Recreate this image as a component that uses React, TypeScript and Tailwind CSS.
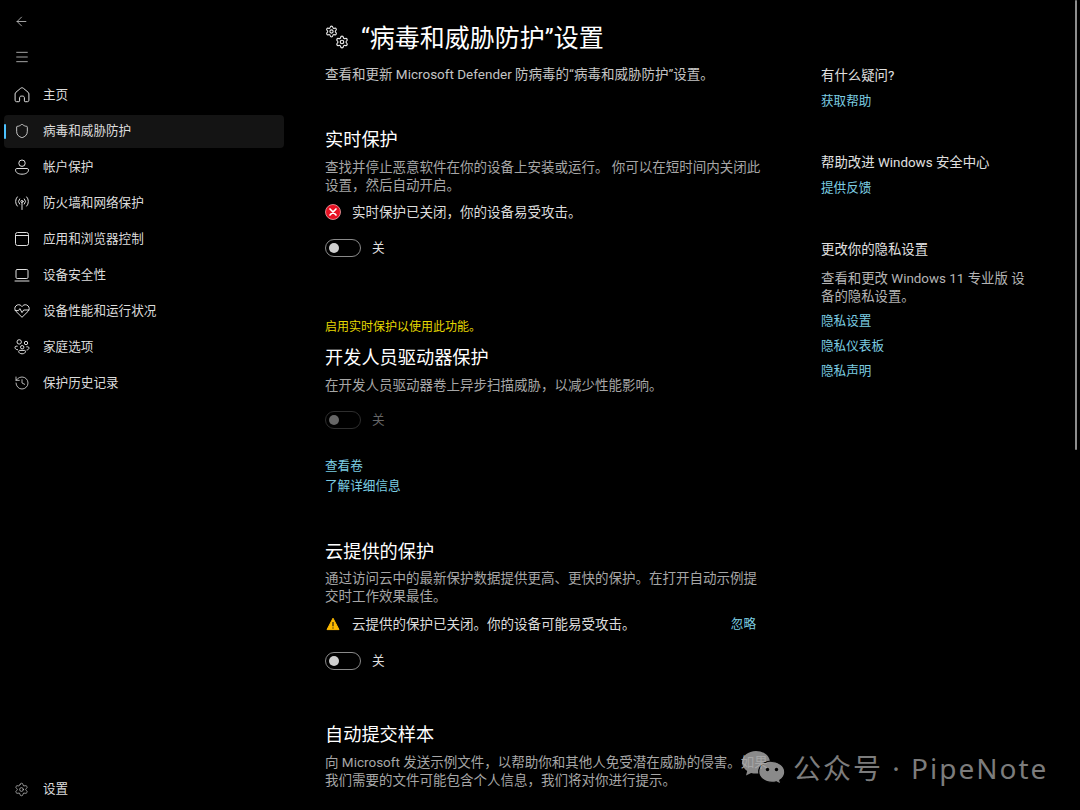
import React, { FC, ReactNode } from "react";
import { ArrowLeft, History, Menu, Settings, Shield } from "lucide-react";

const HomeIcon = () => (
  <svg width="16" height="16" viewBox="0 0 16 16" fill="none" stroke="currentColor" strokeWidth="1">
    <path d="M6.6 1.3 2 5.2c-.6.5-.9 1-.9 1.8v6.3c0 .8.6 1.4 1.4 1.4h2.3c.5 0 .8-.3.8-.8v-3.2c0-.9.7-1.600 1.600-1.600h1.600c.9 0 1.600.7 1.600 1.600v3.200c0 .5.3.8.8.8h2.300c.8 0 1.400-.6 1.400-1.400V7c0-.8-.3-1.300-.9-1.800L9.400 1.300c-.9-.7-1.900-.7-2.800 0Z" />
  </svg>
);

const PersonIcon = () => (
  <svg width="16" height="16" viewBox="0 0 16 16" fill="none" stroke="currentColor" strokeWidth="1">
    <circle cx="8" cy="4.2" r="3.2" />
    <path d="M2.8 9.5h10.4c.7 0 1.3.6 1.3 1.3 0 2.7-2.7 4.4-6.5 4.4s-6.5-1.7-6.5-4.400c0-.7.6-1.300 1.300-1.300Z" />
  </svg>
);

const AntennaIcon = () => (
  <svg width="16" height="16" viewBox="0 0 16 16" fill="none" stroke="currentColor" strokeWidth="1" strokeLinecap="round">
    <circle cx="8" cy="6.5" r="1.1" />
    <path d="M8 8v6.5M5.600 3.900a3.700 3.700 0 0 0 0 5.200M10.400 3.900a3.700 3.700 0 0 1 0 5.200M3.300 1.900a6.800 6.800 0 0 0 0 9.200M12.700 1.900a6.800 6.800 0 0 1 0 9.200" />
  </svg>
);

const WindowIcon = () => (
  <svg width="16" height="16" viewBox="0 0 16 16" fill="none" stroke="currentColor" strokeWidth="1">
    <rect x="1.5" y="1.5" width="13" height="13" rx="2" />
    <path d="M1.5 4.5h13" />
  </svg>
);

const LaptopIcon = () => (
  <svg width="16" height="16" viewBox="0 0 16 16" fill="none" stroke="currentColor" strokeWidth="1" strokeLinecap="round">
    <rect x="2" y="2.5" width="12" height="9" rx="1.2" />
    <path d="M1 14h14" />
  </svg>
);

const HeartIcon = () => (
  <svg width="16" height="16" viewBox="0 0 16 16" fill="none" stroke="currentColor" strokeWidth="1" strokeLinejoin="round">
    <path d="M8 14.300 2 8.400C.4 6.800.4 4.300 2 2.800c1.600-1.500 3.900-1.400 5.400.1l.6.6.6-.6c1.500-1.500 3.800-1.600 5.400-.1 1.600 1.500 1.600 4 0 5.600l-6 5.900Z" />
    <path d="M.8 7.600h3.700l1.400-2 2.100 4 1.700-2.600h5.500" />
  </svg>
);

const FamilyIcon = () => (
  <svg width="16" height="16" viewBox="0 0 16 16" fill="none" stroke="currentColor" strokeWidth="1">
    <circle cx="5.2" cy="2.9" r="2.2" />
    <circle cx="12" cy="4" r="1.7" />
    <circle cx="8.2" cy="8.2" r="1.7" />
    <path d="M3.600 7.200H2.200c-.7 0-1.200.5-1.200 1.100 0 1.500 1.100 2.400 3 2.500M12.400 7.800h1.400c.7 0 1.200.5 1.200 1.100 0 1.200-1 2-2.400 2.100" />
    <path d="M5.600 11.400h5c.5 0 .9.4.9.9 0 1.500-1.400 2.500-3.400 2.500s-3.400-1-3.400-2.500c0-.5.4-.9.9-.9Z" />
  </svg>
);

const ErrorIcon = () => (
  <svg width="16" height="16" viewBox="0 0 16 16">
    <circle cx="8" cy="8" r="7.500" fill="#e81123" stroke="#f3a3a8" strokeWidth="0.8" />
    <path d="M5 5l6 6M11 5l-6 6" stroke="#fff" strokeWidth="1.7" strokeLinecap="round" />
  </svg>
);

const WarningIcon = () => (
  <svg width="14" height="14" viewBox="0 0 14 14">
    <path d="M7 1.200 13 12.600H1L7 1.200Z" fill="#fcb900" stroke="#fcb900" strokeLinejoin="round" />
    <path d="M7 5v4.300M7 10.400v1.100" stroke="#111" strokeWidth="1.1" />
  </svg>
);

const WeChatIcon = () => (
  <svg width="46" height="38" viewBox="0 0 46 38" fill="#8a8a8a">
    <path d="M15 2C7.300 2 1 7 1 13.200c0 3.500 2 6.600 5.200 8.700L5 26.500l5.100-2.600c1.500.4 3.100.6 4.900.6 7.700 0 14-5 14-11.300S22.700 2 15 2Z" />
    <path stroke="#000" strokeWidth="1.2" d="M31 12c-7.400 0-13.300 4.800-13.300 10.700S23.600 33.400 31 33.400c1.500 0 3-.2 4.300-.6l4.600 2.500-1.100-4.100c3.100-2 5-4.900 5-8 0-5.900-5.900-10.700-12.800-10.700Z" />
    <circle cx="26.500" cy="20.500" r="1.700" fill="#000" />
    <circle cx="35.500" cy="20.500" r="1.700" fill="#000" />
  </svg>
);

const navItems: { label: string; icon: ReactNode; active?: boolean }[] = [
  { label: "主页", icon: <HomeIcon /> },
  { label: "病毒和威胁防护", icon: <Shield size={16} strokeWidth={1.3} />, active: true },
  { label: "帐户保护", icon: <PersonIcon /> },
  { label: "防火墙和网络保护", icon: <AntennaIcon /> },
  { label: "应用和浏览器控制", icon: <WindowIcon /> },
  { label: "设备安全性", icon: <LaptopIcon /> },
  { label: "设备性能和运行状况", icon: <HeartIcon /> },
  { label: "家庭选项", icon: <FamilyIcon /> },
  { label: "保护历史记录", icon: <History size={16} strokeWidth={1.2} /> },
];

const Toggle: FC<{ disabled?: boolean }> = ({ disabled }) => (
  <div className="flex h-[18px] items-center">
    <div
      className={`flex h-[18px] w-9 items-center rounded-full border pl-[3px] ${
        disabled ? "border-[#2e2e2e]" : "border-[#8a8a8a]"
      }`}
    >
      <div className={`size-[10px] rounded-full ${disabled ? "bg-[#666]" : "bg-[#cfcfcf]"}`} />
    </div>
    <span className={`ml-[11px] text-[12.6px] leading-[18px] ${disabled ? "text-[#666]" : "text-[#e0e0e0]"}`}>关</span>
  </div>
);

const Heading: FC<{ children: ReactNode; className?: string }> = ({ children, className = "" }) => (
  <h2 className={`text-[18.2px] leading-[24px] text-white ${className}`}>{children}</h2>
);

const Desc: FC<{ children: ReactNode; className?: string }> = ({ children, className = "" }) => (
  <p className={`text-[13.5px] leading-[18px] text-[#a6a6a6] ${className}`}>{children}</p>
);

const LinkText: FC<{ children: ReactNode; className?: string }> = ({ children, className = "" }) => (
  <a className={`block text-[12.6px] leading-[18px] text-[#7ccde2] ${className}`}>{children}</a>
);

export default function App() {
  return (
    <div className="relative flex h-[810px] w-[1080px] overflow-hidden bg-black font-['Roboto','Noto_Sans_CJK_SC',sans-serif] text-[#e6e6e6]">
      {/* Sidebar */}
      <aside className="flex h-full w-[325px] shrink-0 flex-col pl-1">
        <div className="flex h-[36px] items-center pl-[10px] pt-[6px] text-[#c8c8c8]">
          <ArrowLeft size={15} strokeWidth={1.3} />
        </div>
        <div className="flex h-[36px] items-center pl-[10px] pt-[6px] text-[#e0e0e0]">
          <Menu size={16} strokeWidth={1.1} />
        </div>
        <nav className="w-[280px] pt-[5px]">
          {navItems.map((item) => (
            <div key={item.label} className="flex h-[36px] items-center">
              <div
                className={`relative flex h-[33px] w-full items-center rounded pl-[10px] text-[12.6px] ${
                  item.active ? "bg-[#141414]" : ""
                }`}
              >
                {item.active && <span className="absolute left-0 h-[15px] w-[2px] rounded-full bg-[#4cc2ff]" />}
                <span className="flex size-4 items-center justify-center text-[#e0e0e0]">{item.icon}</span>
                <span className="ml-[13px] leading-[18px] text-[#dcdcdc]">{item.label}</span>
              </div>
            </div>
          ))}
        </nav>
        <div className="mt-auto mb-[12px] flex h-[18px] items-center pl-[10px] text-[12.6px] text-[#dcdcdc]">
          <Settings size={15} strokeWidth={1.1} className="text-[#d0d0d0]" />
          <span className="ml-[14px] leading-[18px]">设置</span>
        </div>
      </aside>

      {/* Main column */}
      <main className="w-[496px] shrink-0 pt-[21px]">
        <div className="flex h-[36px] items-center">
          <div className="relative size-[25px] shrink-0">
            <Settings size={13} strokeWidth={2} className="absolute left-[0px] top-[-2px] text-[#e8e8e8]" />
            <Settings size={14} strokeWidth={2} className="absolute left-[10px] top-[8px] text-[#e8e8e8]" />
          </div>
          <h1 className="ml-[11px] text-[25px] leading-[36px] text-white">“病毒和威胁防护”设置</h1>
        </div>
        <Desc className="mt-[8px] text-[#c4c4c4]">查看和更新 Microsoft Defender 防病毒的“病毒和威胁防护”设置。</Desc>

        <Heading className="mt-[45px]">实时保护</Heading>
        <Desc className="mt-[6px] w-[460px]">
          查找并停止恶意软件在你的设备上安装或运行。 你可以在短时间内关闭此
          <br />
          设置，然后自动开启。
        </Desc>
        <div className="mt-[9px] flex h-[18px] items-center">
          <ErrorIcon />
          <span className="ml-[11px] text-[13.5px] leading-[18px] text-[#dcdcdc]">实时保护已关闭，你的设备易受攻击。</span>
        </div>
        <div className="mt-[18px]">
          <Toggle />
        </div>

        <p className="mt-[61px] text-[12px] leading-[18px] text-[#e6d800]">启用实时保护以使用此功能。</p>
        <Heading className="mt-[10px]">开发人员驱动器保护</Heading>
        <Desc className="mt-[6px]">在开发人员驱动器卷上异步扫描威胁，以减少性能影响。</Desc>
        <div className="mt-[17px]">
          <Toggle disabled />
        </div>
        <LinkText className="mt-[28px]">查看卷</LinkText>
        <LinkText className="mt-[2px]">了解详细信息</LinkText>

        <Heading className="mt-[45px]">云提供的保护</Heading>
        <Desc className="mt-[5px] w-[460px]">
          通过访问云中的最新保护数据提供更高、更快的保护。在打开自动示例提
          <br />
          交时工作效果最佳。
        </Desc>
        <div className="mt-[10px] flex h-[18px] w-[431px] items-center">
          <span className="pl-[1px]">
            <WarningIcon />
          </span>
          <span className="ml-[12px] text-[13.5px] leading-[18px] text-[#dcdcdc]">云提供的保护已关闭。你的设备可能易受攻击。</span>
          <LinkText className="ml-auto">忽略</LinkText>
        </div>
        <div className="mt-[19px]">
          <Toggle />
        </div>

        <Heading className="mt-[53px]">自动提交样本</Heading>
        <Desc className="relative z-10 mt-[6px] w-[460px]">
          向 Microsoft 发送示例文件，以帮助你和其他人免受潜在威胁的侵害。如果
          <br />
          我们需要的文件可能包含个人信息，我们将对你进行提示。
        </Desc>
      </main>

      {/* Right column */}
      <section className="w-[216px] pt-[67px] text-[13.4px] leading-[18px]">
        <p className="text-[#e0e0e0]">有什么疑问?</p>
        <LinkText className="mt-[7px]">获取帮助</LinkText>

        <p className="mt-[44px] text-[#e0e0e0]">帮助改进 Windows 安全中心</p>
        <LinkText className="mt-[7px]">提供反馈</LinkText>

        <p className="mt-[44px] text-[#e0e0e0]">更改你的隐私设置</p>
        <p className="mt-[11px] text-[#b4b4b4]">
          查看和更改 Windows 11 专业版 设
          <br />
          备的隐私设置。
        </p>
        <LinkText className="mt-[6px]">隐私设置</LinkText>
        <LinkText className="mt-[7px]">隐私仪表板</LinkText>
        <LinkText className="mt-[7px]">隐私声明</LinkText>
      </section>

      {/* Scrollbar */}
      <div className="absolute right-[3px] top-0 h-[450px] w-[2px] rounded-full bg-[#8e8e8e]" />

      {/* Watermark */}
      <div className="absolute left-[741px] top-[749px] flex items-center font-['Noto_Sans','Noto_Sans_CJK_SC',sans-serif]">
        <WeChatIcon />
        <span className="ml-[6px] text-[28px] leading-[36px] tracking-[2px] text-[#7c7c7c]">公众号 · PipeNote</span>
      </div>
    </div>
  );
}
